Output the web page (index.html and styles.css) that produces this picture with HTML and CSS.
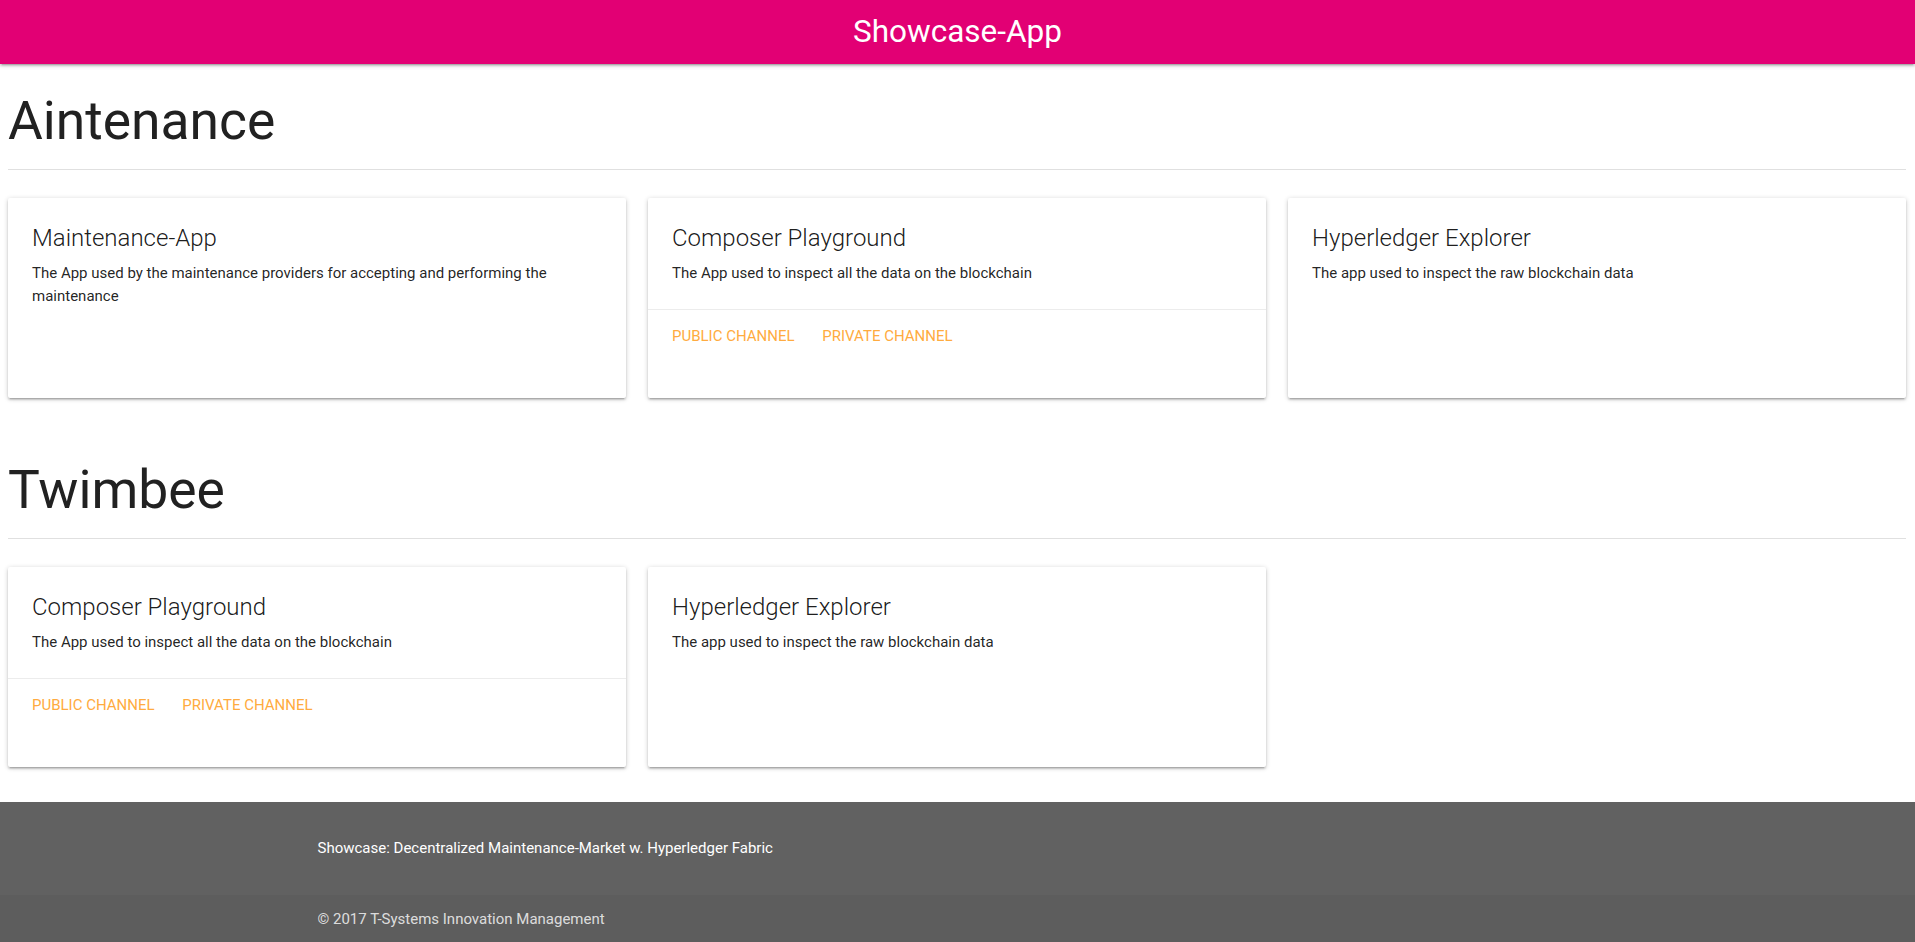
FILE: index.html
```html
<!DOCTYPE html>
<html lang="en">
<head>
<meta charset="utf-8">
<title>Showcase-App</title>
<link rel="stylesheet" href="styles.css">
</head>
<body>
<nav class="navbar">
  <span class="brand">Showcase-App</span>
</nav>
<main class="main">
  <section class="section">
    <h2 class="section-title">Aintenance</h2>
    <div class="divider"></div>
    <div class="cards">
      <div class="card">
        <div class="card-content">
          <span class="card-title">Maintenance-App</span>
          <p class="card-text">The App used by the maintenance providers for accepting and performing the maintenance</p>
        </div>
      </div>
      <div class="card">
        <div class="card-content">
          <span class="card-title">Composer Playground</span>
          <p class="card-text">The App used to inspect all the data on the blockchain</p>
        </div>
        <div class="card-action">
          <a class="action-link" href="#">Public Channel</a>
          <a class="action-link" href="#">Private Channel</a>
        </div>
      </div>
      <div class="card">
        <div class="card-content">
          <span class="card-title">Hyperledger Explorer</span>
          <p class="card-text">The app used to inspect the raw blockchain data</p>
        </div>
      </div>
    </div>
  </section>
  <section class="section">
    <h2 class="section-title">Twimbee</h2>
    <div class="divider"></div>
    <div class="cards">
      <div class="card">
        <div class="card-content">
          <span class="card-title">Composer Playground</span>
          <p class="card-text">The App used to inspect all the data on the blockchain</p>
        </div>
        <div class="card-action">
          <a class="action-link" href="#">Public Channel</a>
          <a class="action-link" href="#">Private Channel</a>
        </div>
      </div>
      <div class="card">
        <div class="card-content">
          <span class="card-title">Hyperledger Explorer</span>
          <p class="card-text">The app used to inspect the raw blockchain data</p>
        </div>
      </div>
    </div>
  </section>
</main>
<footer class="page-footer">
  <div class="footer-main">
    <div class="container">
      <p class="footer-title">Showcase: Decentralized Maintenance-Market w. Hyperledger Fabric</p>
    </div>
  </div>
  <div class="footer-copyright">
    <div class="container">© 2017 T-Systems Innovation Management</div>
  </div>
</footer>
</body>
</html>
```
FILE: styles.css
```css
* { box-sizing: border-box; }

html {
  font-family: Roboto, "Liberation Sans", sans-serif;
  font-size: 15px;
  line-height: 1.5;
  color: rgba(0, 0, 0, 0.87);
}

body {
  margin: 0;
  background: #fff;
}

.navbar {
  position: relative;
  z-index: 2;
  height: 64px;
  line-height: 64px;
  background: #e20074;
  color: #fff;
  text-align: center;
  box-shadow: 0 2px 2px 0 rgba(0,0,0,0.14), 0 3px 1px -2px rgba(0,0,0,0.12), 0 1px 5px 0 rgba(0,0,0,0.2);
}

.brand {
  font-size: 31.5px;
  font-weight: 400;
}

.main {
  padding: 0 9px 0 8px;
}

.section {
  padding: 26px 0 35px;
}

.section-title {
  margin: 0 0 17px;
  font-size: 53.4px;
  line-height: 62px;
  font-weight: 400;
  color: #212121;
}

.divider {
  height: 1px;
  background: #e0e0e0;
}

.cards {
  margin-top: 28px;
  display: grid;
  grid-template-columns: repeat(3, 1fr);
  column-gap: 22px;
}

.card {
  height: 200px;
  overflow: hidden;
  background: #fff;
  border-radius: 2px;
  box-shadow: 0 2px 2px 0 rgba(0,0,0,0.14), 0 3px 1px -2px rgba(0,0,0,0.12), 0 1px 5px 0 rgba(0,0,0,0.2);
}

.card-content {
  padding: 24px;
}

.card-title {
  display: block;
  font-size: 24px;
  line-height: 32px;
  font-weight: 300;
  margin-bottom: 8px;
  color: rgba(0, 0, 0, 0.9);
}

.card-text {
  margin: 0;
  font-size: 15px;
  line-height: 22.5px;
  color: rgba(0, 0, 0, 0.87);
}

.card-action {
  border-top: 1px solid rgba(160, 160, 160, 0.2);
  padding: 15px 24px 16px;
  line-height: 22.5px;
}

.action-link {
  color: #ffab40;
  text-decoration: none;
  text-transform: uppercase;
  margin-right: 24px;
  font-size: 15px;
}

.page-footer {
  background: #616161;
  color: #fff;
}

.footer-main {
  padding: 20px 0 20px;
}

.container {
  width: 1280px;
  margin: 0 auto;
}

.footer-title {
  margin: 15px 0;
  font-size: 15px;
  font-weight: 400;
  color: #fff;
}

.footer-copyright {
  min-height: 50px;
  padding: 10px 0;
  display: flex;
  align-items: center;
  background: rgba(51, 51, 51, 0.08);
  color: rgba(255, 255, 255, 0.8);
  font-size: 15px;
}
```
